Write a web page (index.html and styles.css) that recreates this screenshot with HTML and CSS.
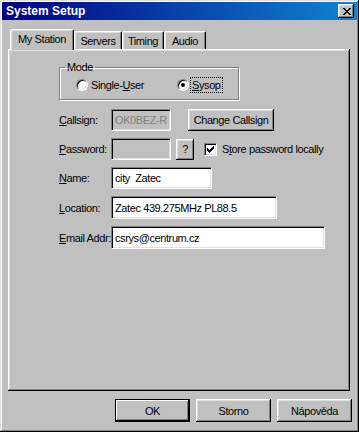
FILE: index.html
```html
<!DOCTYPE html>
<html>
<head>
<meta charset="utf-8">
<title>System Setup</title>
<link rel="stylesheet" href="styles.css">
</head>
<body>
<div class="window">
  <div class="titlebar">
    <span class="title">System Setup</span>
    <div class="close">
      <svg width="8" height="7" viewBox="0 0 8 7" shape-rendering="crispEdges"><path d="M0 0h2v1H0zM6 0h2v1H6zM1 1h2v1H1zM5 1h2v1H5zM2 2h4v1H2zM3 3h2v1H3zM2 4h4v1H2zM1 5h2v1H1zM5 5h2v1H5zM0 6h2v1H0zM6 6h2v1H6z" fill="#000"/></svg>
    </div>
  </div>
  <div class="tabs">
    <div class="tab active">My Station</div>
    <div class="tab w-servers">Servers</div>
    <div class="tab w-timing">Timing</div>
    <div class="tab w-audio">Audio</div>
  </div>
  <div class="panel">
    <fieldset class="group">
      <legend>Mode</legend>
      <div class="radios">
        <div class="radio first"><span class="radio-box"></span><span class="radio-text">Single-<u>U</u>ser</span></div>
        <div class="radio"><span class="radio-box"><span class="dot"></span></span><span class="radio-text focus"><u>S</u>ysop</span></div>
      </div>
    </fieldset>
    <div class="form">
      <div class="row h22">
        <span class="label"><u>C</u>allsign:</span>
        <div class="field disabled w-small">OK0BEZ-R</div>
        <div class="btn btn-change">Change Callsign</div>
      </div>
      <div class="row h22">
        <span class="label"><u>P</u>assword:</span>
        <div class="field disabled w-small"></div>
        <div class="btn btn-q">?</div>
        <div class="check">
          <svg width="7" height="7" viewBox="0 0 7 7" shape-rendering="crispEdges"><path d="M6 0h1v3H6zM5 1h1v3H5zM4 2h1v3H4zM3 3h1v3H3zM2 4h1v3H2zM1 3h1v3H1zM0 2h1v3H0z" fill="#000"/></svg>
        </div>
        <span class="check-text">S<u>t</u>ore password locally</span>
      </div>
      <div class="row h22">
        <span class="label"><u>N</u>ame:</span>
        <div class="field w-name">city  Zatec</div>
      </div>
      <div class="row h23">
        <span class="label"><u>L</u>ocation:</span>
        <div class="field w-loc">Zatec 439.275MHz PL88.5</div>
      </div>
      <div class="row h23">
        <span class="label"><u>E</u>mail Addr:</span>
        <div class="field w-email">csrys@centrum.cz</div>
      </div>
    </div>
  </div>
  <div class="actions">
    <div class="btn btn-action default">OK</div>
    <div class="btn btn-action">Storno</div>
    <div class="btn btn-action">Nápověda</div>
  </div>
</div>
</body>
</html>
```
FILE: styles.css
```css
* { box-sizing: border-box; }
html, body { margin: 0; padding: 0; background: #c0c0c0; }
body {
  font-family: "Liberation Sans", Arial, sans-serif;
  font-size: 11px;
  letter-spacing: -0.4px;
  color: #000;
}
.window {
  width: 359px;
  height: 432px;
  padding: 2px;
  background: #c0c0c0;
  box-shadow: inset -1px -1px #000, inset 1px 1px #dfdfdf, inset -2px -2px #808080, inset 2px 2px #fff;
}
.titlebar {
  height: 18px;
  display: flex;
  align-items: center;
  justify-content: space-between;
  padding: 0 3px 0 4px;
  background: linear-gradient(to right, #000080, #1084d0);
}
.title {
  color: #fff;
  font-weight: bold;
  font-size: 12px;
  letter-spacing: 0;
  white-space: nowrap;
}
.close {
  width: 16px;
  height: 14px;
  background: #c0c0c0;
  display: flex;
  align-items: center;
  justify-content: center;
  padding-left: 1px;
  box-shadow: inset -1px -1px #000, inset 1px 1px #fff, inset -2px -2px #808080, inset 2px 2px #dfdfdf;
}
.close svg { display: block; }

.tabs {
  display: flex;
  align-items: flex-start;
  height: 20px;
  margin: 9px 0 0 8px;
}
.tab {
  height: 18px;
  margin-top: 2px;
  display: flex;
  align-items: center;
  justify-content: center;
  white-space: nowrap;
  border-top: 1px solid #fff;
  border-left: 1px solid #fff;
  border-right: 1px solid #000;
  border-radius: 2px 2px 0 0;
  box-shadow: inset -1px 0 #808080, inset 1px 1px #dfdfdf;
  background: #c0c0c0;
}
.tab.active {
  width: 64px;
  height: 21px;
  margin-top: 0;
  padding-bottom: 2px;
  position: relative;
  z-index: 1;
}
.w-servers { width: 48px; }
.w-timing { width: 42px; }
.w-audio { width: 42px; }

.panel {
  width: 342px;
  height: 342px;
  margin-left: 6px;
  padding: 12px 0 0 51px;
  box-shadow: inset -1px -1px #000, inset 1px 1px #fff, inset -2px -2px #808080, inset 2px 2px #dfdfdf;
}
.group {
  width: 180px;
  margin: 0;
  padding: 0 0 3px 0;
  border: 1px solid #808080;
  box-shadow: inset 1px 1px #fff, 1px 1px 0 #fff;
  min-inline-size: 0;
}
.group legend {
  padding: 0 2px;
  margin-left: 5px;
  line-height: 13px;
}
.radios {
  height: 22px;
  display: flex;
  align-items: center;
  padding-left: 16px;
}
.radio {
  display: flex;
  align-items: center;
  gap: 2px;
}
.radio.first { width: 101px; }
.radio-box {
  width: 12px;
  height: 12px;
  border-radius: 50%;
  background: #fff;
  border: 1px solid;
  border-color: #808080 #fff #fff #808080;
  box-shadow: inset 1px 1px #000, inset -1px -1px #dfdfdf;
  display: flex;
  align-items: center;
  justify-content: center;
}
.dot {
  width: 4px;
  height: 4px;
  border-radius: 50%;
  background: #000;
}
.radio-text {
  padding: 1px 1px;
  line-height: 12px;
  white-space: nowrap;
}
.radio-text.focus { outline: 1px dotted #000; }

.form {
  margin-top: 9px;
  display: flex;
  flex-direction: column;
  gap: 7px;
}
.row {
  display: flex;
  align-items: center;
}
.h22 { height: 22px; }
.h23 { height: 23px; }
.label {
  width: 52px;
  white-space: nowrap;
}
.field {
  height: 100%;
  display: flex;
  align-items: center;
  padding: 0 3px;
  background: #fff;
  white-space: pre;
  border: 1px solid;
  border-color: #808080 #fff #fff #808080;
  box-shadow: inset 1px 1px #000, inset -1px -1px #dfdfdf;
}
.field.disabled {
  background: #c0c0c0;
  color: #808080;
}
.w-small { width: 60px; }
.w-name { width: 101px; }
.w-loc { width: 166px; }
.w-email { width: 214px; }

.btn {
  display: flex;
  align-items: center;
  justify-content: center;
  white-space: nowrap;
  background: #c0c0c0;
  box-shadow: inset -1px -1px #000, inset 1px 1px #fff, inset -2px -2px #808080, inset 2px 2px #dfdfdf;
}
.btn-change {
  width: 86px;
  height: 22px;
  margin-left: 17px;
}
.btn-q {
  width: 18px;
  height: 21px;
  margin-left: 5px;
}
.check {
  width: 13px;
  height: 13px;
  margin-left: 10px;
  background: #fff;
  border: 1px solid;
  border-color: #808080 #fff #fff #808080;
  box-shadow: inset 1px 1px #000, inset -1px -1px #dfdfdf;
  display: flex;
  align-items: center;
  justify-content: center;
}
.check svg { display: block; }
.check-text {
  margin-left: 5px;
  white-space: nowrap;
}

.actions {
  display: flex;
  justify-content: flex-end;
  gap: 6px;
  margin-top: 8px;
  padding-right: 5px;
}
.btn-action {
  width: 75px;
  height: 23px;
}
.btn-action.default {
  box-shadow: inset 0 0 0 1px #000, inset -2px -2px #000, inset 2px 2px #fff, inset -3px -3px #808080;
}
```
